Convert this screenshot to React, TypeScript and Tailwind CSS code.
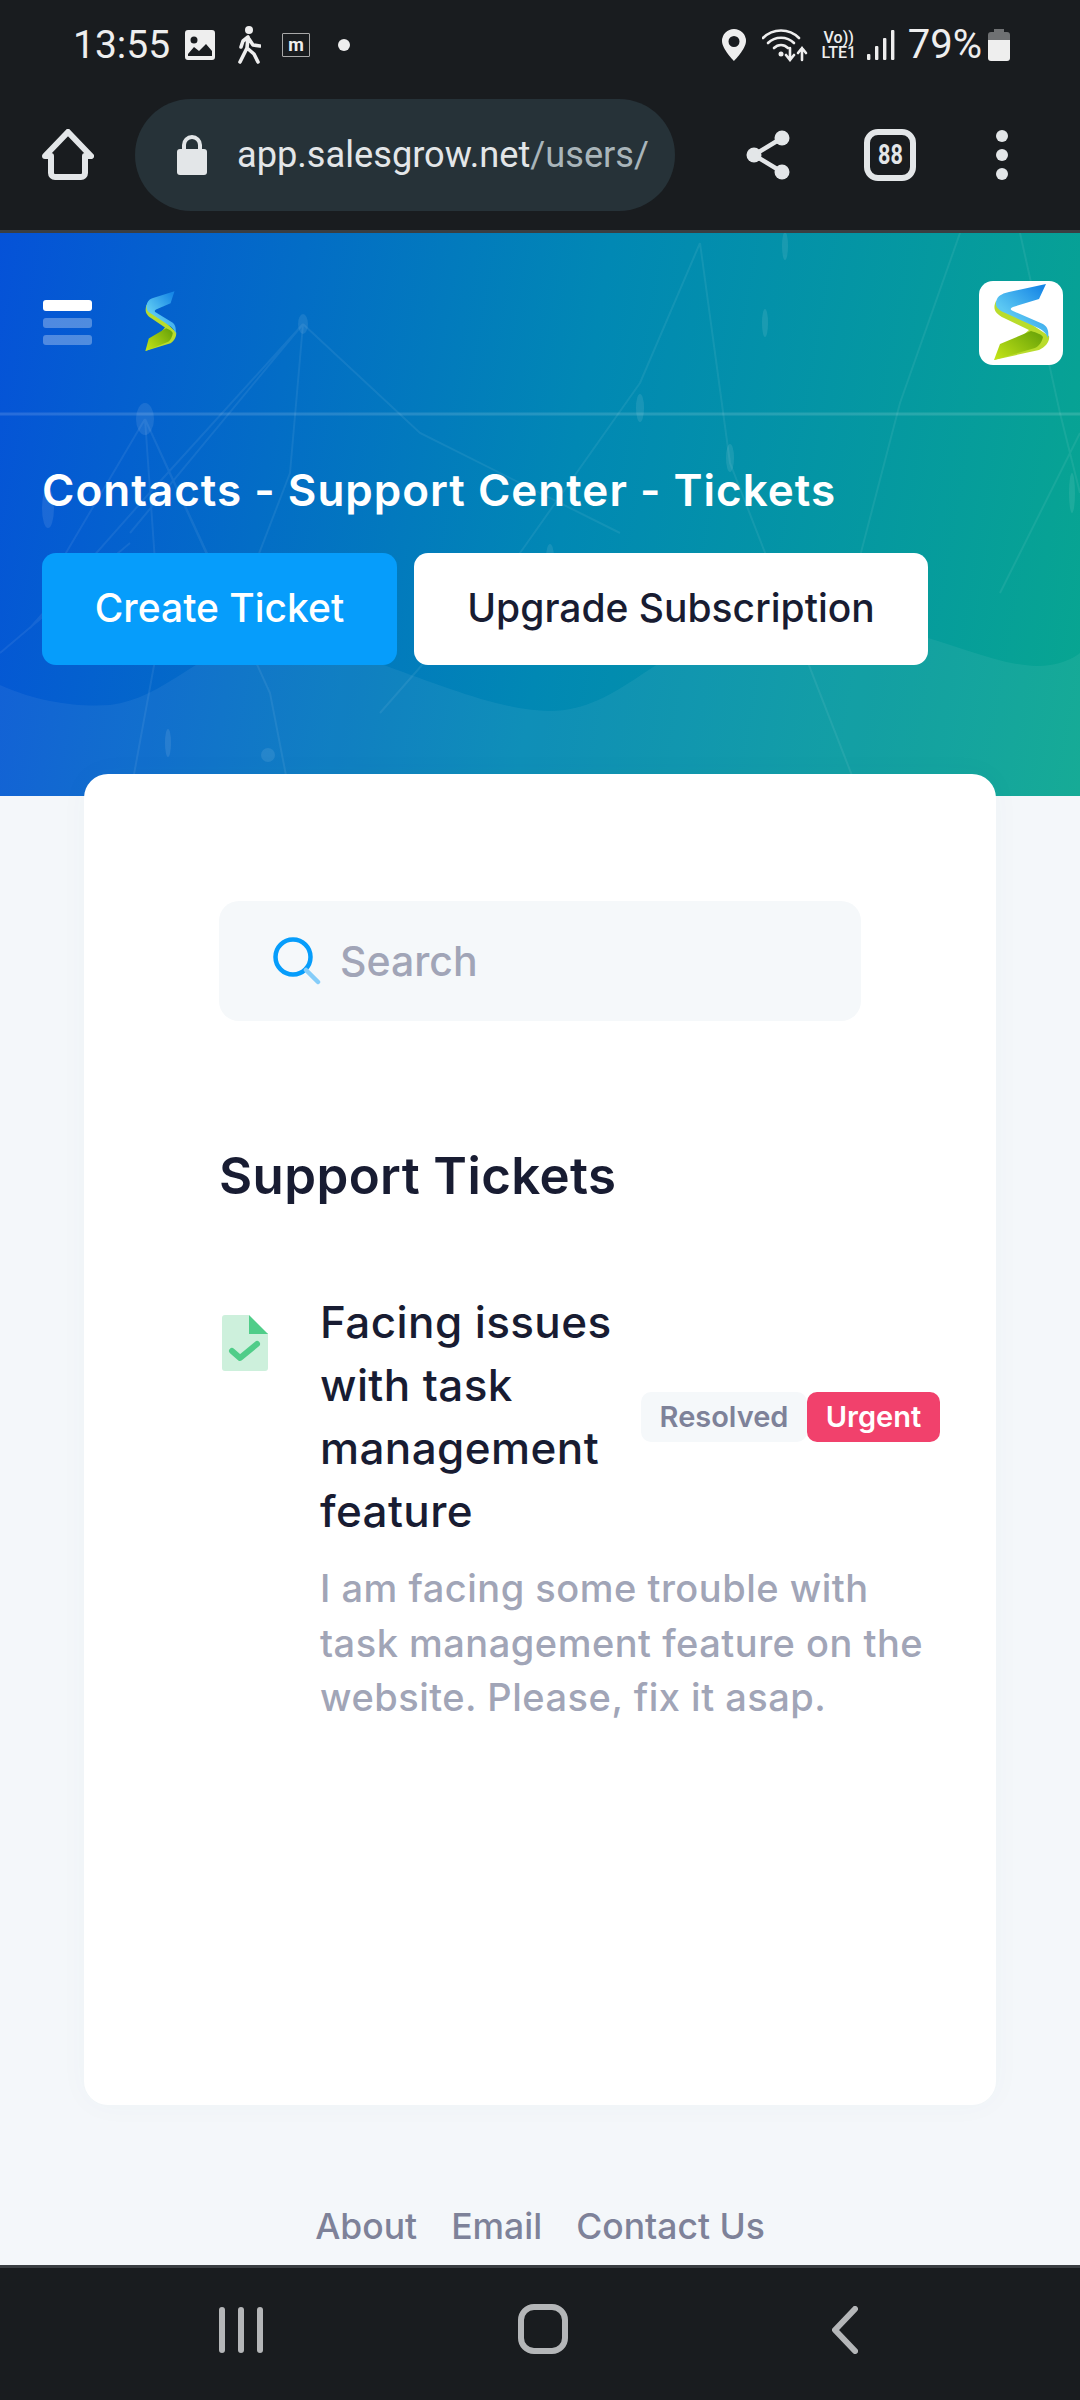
const Logo = ({ id, className }: { id: string; className: string }) => (
  <svg viewBox="0 0 84 84" preserveAspectRatio="none" className={className} aria-hidden="true">
    <defs>
      <linearGradient id={`${id}b`} x1="0.8" y1="0" x2="0.3" y2="0.6">
        <stop offset="0" stopColor="#1787e6" />
        <stop offset="1" stopColor="#5cc8f2" />
      </linearGradient>
      <linearGradient id={`${id}g`} x1="0" y1="1" x2="1" y2="0.3">
        <stop offset="0" stopColor="#c6e617" />
        <stop offset="1" stopColor="#6fa80a" />
      </linearGradient>
    </defs>
    <path d="M17 20C13 29 17 33 25 37L50 49L15 79L60 69C67 66 71 60 70 55L40 35Z" fill="#b9dc2c" />
    <path d="M67 3L60 18L34 26C31 27 31 29 34 30L64 43C69 46 70 51 69 57C67 51 62 48 57 46L24 31C18 28 15 24 18 18C20 14 25 12 30 11Z" fill={`url(#${id}b)`} />
    <path d="M52 50C58 52 62 53 64 56C63 61 60 65 56 67L15 79L21 63Z" fill={`url(#${id}g)`} />
  </svg>
);

const HeaderArt = () => (
  <svg viewBox="0 0 1080 563" className="absolute inset-0 h-full w-full" aria-hidden="true">
    <path d="M0 452C40 470 80 474 110 472C170 465 210 405 270 405C350 405 470 478 550 478C620 478 660 410 730 400C800 392 860 388 910 400C960 412 1010 438 1050 432C1062 430 1072 426 1080 420V563H0Z" fill="#ffffff" opacity="0.06" />
    <path d="M0 181H1080" stroke="#ffffff" strokeOpacity="0.14" strokeWidth="3" />
    <g stroke="#ffffff" strokeOpacity="0.07" strokeWidth="2" fill="none">
      <path d="M303 91L145 265L30 395M303 91L130 300M303 91L290 240L240 370M303 91L420 200L620 300M145 186L60 330M145 186L230 370M145 186L160 400L130 563M145 186L270 460L290 563M640 150L700 10M640 150L520 320L380 480M730 230L700 10M730 230L860 563M1020 0L1060 180L1080 260M960 0L900 170L840 400M1080 200L1000 360M0 420L130 310" />
    </g>
    <g fill="#ffffff" opacity="0.09">
      <ellipse cx="303" cy="91" rx="5" ry="10" />
      <ellipse cx="145" cy="186" rx="9" ry="16" />
      <circle cx="162" cy="365" r="6" />
      <circle cx="225" cy="365" r="6" />
      <circle cx="268" cy="522" r="7" />
      <ellipse cx="640" cy="175" rx="4" ry="14" />
      <ellipse cx="785" cy="13" rx="3" ry="14" />
      <ellipse cx="765" cy="90" rx="3" ry="14" />
      <ellipse cx="730" cy="225" rx="4" ry="14" />
      <ellipse cx="550" cy="325" rx="4" ry="14" />
      <ellipse cx="880" cy="380" rx="5" ry="20" />
      <ellipse cx="48" cy="275" rx="6" ry="20" />
      <ellipse cx="168" cy="510" rx="3" ry="14" />
      <ellipse cx="1072" cy="260" rx="3" ry="20" />
    </g>
  </svg>
);

export default function App() {
  return (
    <div className="flex h-[2400px] w-[1080px] flex-col overflow-hidden bg-[#f4f7fa] font-[Inter,sans-serif]">
      {/* Status bar + browser toolbar */}
      <div className="h-[233px] shrink-0 bg-[#191c1f] font-[Roboto,sans-serif]">
        <div className="flex h-[90px] items-center justify-between pl-[73px] pr-[70px] text-[#eeeeee]">
          <div className="flex items-center">
            <span className="text-[39px] leading-none">13:55</span>
            <svg viewBox="0 0 30 30" className="ml-[15px] h-[30px] w-[30px]" aria-hidden="true">
              <path fillRule="evenodd" d="M3 0H27A3 3 0 0 1 30 3V27A3 3 0 0 1 27 30H3A3 3 0 0 1 0 27V3A3 3 0 0 1 3 0ZM3 24V26H27V21L21 14L14 21L9 17ZM9 6.5A3.5 3.5 0 1 0 9 13.5A3.5 3.5 0 1 0 9 6.5Z" fill="#eeeeee" />
            </svg>
            <svg viewBox="0 0 26 38" className="ml-[20px] h-[38px] w-[26px]" aria-hidden="true">
              <circle cx="14" cy="4" r="4" fill="#eeeeee" />
              <path d="M13 11L8 15L6 21M13 11L12 22L5 36M12 22L19 28L23 36M14 13L18 19L25 20" stroke="#eeeeee" strokeWidth="3.6" fill="none" strokeLinecap="round" strokeLinejoin="round" />
            </svg>
            <div className="ml-[21px] flex h-[24px] w-[28px] items-center justify-center rounded-[1px] border border-[#a8a8a8] text-[18px] font-bold leading-none">m</div>
            <div className="ml-[28px] h-[12px] w-[12px] rounded-full bg-[#eeeeee]" />
          </div>
          <div className="flex items-center">
            <svg viewBox="0 0 24 32" className="h-[32px] w-[24px]" aria-hidden="true">
              <path fillRule="evenodd" d="M12 0A12 12 0 0 1 24 12C24 20 12 32 12 32C12 32 0 20 0 12A12 12 0 0 1 12 0ZM12 7A5.5 5.5 0 1 0 12 18A5.5 5.5 0 1 0 12 7Z" fill="#eeeeee" />
            </svg>
            <svg viewBox="0 0 46 34" className="ml-[16px] h-[34px] w-[46px]" aria-hidden="true">
              <g fill="none" stroke="#eeeeee" strokeWidth="2.6" strokeLinecap="round">
                <path d="M1 10C11 0 27 0 37 10" />
                <path d="M6 15C13 8 25 8 32 15" />
                <path d="M12 20C16 16 22 16 26 20" />
                <path d="M28 20V31M24 27L28 32L32 27" />
                <path d="M40 32V20M36 25L40 20L44 25" />
              </g>
              <circle cx="19" cy="26" r="2.5" fill="#eeeeee" />
            </svg>
            <div className="ml-[12px] flex w-[38px] flex-col items-center text-[16px] font-medium leading-[15px]">
              <span>Vo))</span>
              <span>LTE1</span>
            </div>
            <svg viewBox="0 0 28 32" className="ml-[9px] h-[32px] w-[28px]" aria-hidden="true">
              <g fill="#eeeeee">
                <rect x="0" y="25" width="3.4" height="6" rx="1" />
                <rect x="8" y="17" width="3.4" height="14" rx="1" />
                <rect x="16" y="9" width="3.4" height="22" rx="1" />
                <rect x="24" y="1" width="3.4" height="30" rx="1" />
              </g>
            </svg>
            <span className="ml-[13px] text-[40px] leading-none">79%</span>
            <svg viewBox="0 0 22 32" className="ml-[6px] h-[32px] w-[22px]" aria-hidden="true">
              <path d="M6 0H16V3H19A3 3 0 0 1 22 6V11H0V6A3 3 0 0 1 3 3H6Z" fill="#6f7173" />
              <path d="M0 11H22V29A3 3 0 0 1 19 32H3A3 3 0 0 1 0 29Z" fill="#eeeeee" />
            </svg>
          </div>
        </div>
        <div className="flex h-[140px] items-center pb-[10px]">
          <svg viewBox="0 0 52 52" className="ml-[42px] h-[52px] w-[52px]" aria-hidden="true">
            <path d="M26 3L49 27H43V44A4 4 0 0 1 39 48H13A4 4 0 0 1 9 44V27H3Z" fill="none" stroke="#e3e6e8" strokeWidth="6" strokeLinejoin="round" />
          </svg>
          <div className="ml-[41px] flex h-[112px] w-[540px] items-center rounded-full bg-[#263238] pl-[42px]">
            <svg viewBox="0 0 30 40" className="h-[40px] w-[30px]" aria-hidden="true">
              <path d="M7 16V10A8 8 0 0 1 23 10V16" fill="none" stroke="#e3e6e8" strokeWidth="4" />
              <rect x="0" y="14" width="30" height="26" rx="3" fill="#e3e6e8" />
            </svg>
            <span className="ml-[30px] whitespace-nowrap text-[36.2px] leading-none text-[#e3e6e8]">
              app.salesgrow.net<span className="text-[#a9b5ba]">/users/</span>
            </span>
          </div>
          <svg viewBox="0 0 44 50" className="ml-[71px] h-[50px] w-[44px]" aria-hidden="true">
            <g fill="#e3e6e8">
              <circle cx="36" cy="8" r="7.5" />
              <circle cx="8" cy="25" r="7.5" />
              <circle cx="36" cy="42" r="7.5" />
            </g>
            <path d="M36 8L8 25L36 42" fill="none" stroke="#e3e6e8" strokeWidth="4.5" />
          </svg>
          <div className="ml-[74px] flex h-[52px] w-[52px] items-center justify-center rounded-[14px] border-[6px] border-[#e3e6e8] text-[#e3e6e8]">
            <span className="scale-x-[0.8] text-[27px] font-bold leading-none">88</span>
          </div>
          <div className="ml-[80px] flex h-[50px] w-[12px] flex-col justify-between">
            <div className="h-[12px] w-[12px] rounded-full bg-[#e3e6e8]" />
            <div className="h-[12px] w-[12px] rounded-full bg-[#e3e6e8]" />
            <div className="h-[12px] w-[12px] rounded-full bg-[#e3e6e8]" />
          </div>
        </div>
        <div className="h-[3px] bg-[#3a3e42]" />
      </div>

      {/* Hero */}
      <div className="relative h-[563px] shrink-0 bg-[linear-gradient(100deg,#0552d8_0%,#0188b4_52%,#08a690_100%)]">
        <HeaderArt />
        <div className="relative flex h-[181px] justify-between pl-[43px] pr-[17px] pt-[48px]">
          <div className="flex items-start">
            <div className="flex w-[49px] flex-col gap-[7px] pt-[19px]">
              <div className="h-[11px] rounded-[3px] bg-white" />
              <div className="h-[10px] rounded-[3px] bg-white/30" />
              <div className="h-[10px] rounded-[3px] bg-white/30" />
            </div>
            <Logo id="s" className="ml-[45px] mt-[8px] h-[66px] w-[47px]" />
          </div>
          <div className="h-[84px] w-[84px] rounded-[14px] bg-white">
            <Logo id="l" className="h-[84px] w-[84px]" />
          </div>
        </div>
        <div className="relative px-[42px]">
          <h1 className="mt-[50px] text-[44px] font-semibold leading-[52px] tracking-[1px] text-white">Contacts - Support Center - Tickets</h1>
          <div className="mt-[37px] flex gap-[17px]">
            <div className="flex h-[112px] w-[355px] items-center justify-center rounded-[14px] bg-[#069dfb] pb-[2px] text-[39px] font-medium text-white">Create Ticket</div>
            <div className="flex h-[112px] w-[514px] items-center justify-center rounded-[14px] bg-white pb-[2px] text-[39px] font-medium text-[#181c32]">Upgrade Subscription</div>
          </div>
        </div>
      </div>

      {/* Card */}
      <div className="relative mx-[84px] -mt-[22px] h-[1331px] shrink-0 rounded-[24px] bg-white px-[135px] pt-[127px] shadow-[0_0_30px_rgba(76,87,125,0.03)]">
        <div className="flex h-[120px] w-[642px] items-center rounded-[20px] bg-[#f5f8fa] pl-[54px]">
          <svg viewBox="0 0 48 48" className="h-[48px] w-[48px]" aria-hidden="true">
            <circle cx="20" cy="20" r="17.5" fill="none" stroke="#069dfb" strokeWidth="4.5" />
            <path d="M33 33L45 45" stroke="#85cdf9" strokeWidth="4.5" strokeLinecap="round" />
          </svg>
          <span className="ml-[19px] text-[41px] font-medium leading-none text-[#a1a5b7]">Search</span>
        </div>
        <h2 className="mt-[123px] text-[51px] font-semibold leading-[64px] tracking-[0.4px] text-[#181c32]">Support Tickets</h2>
        <div className="mt-[83px] flex w-[720px]">
          <svg viewBox="0 0 46 56" className="ml-[3px] mt-[24px] h-[56px] w-[46px] shrink-0" aria-hidden="true">
            <path d="M3 0H27V18H46V53A3 3 0 0 1 43 56H3A3 3 0 0 1 0 53V3A3 3 0 0 1 3 0Z" fill="#cdf0dc" />
            <path d="M27 0L46 19H27Z" fill="#50cd89" />
            <path d="M10 36L18 43L35 29" fill="none" stroke="#50cd89" strokeWidth="6" strokeLinecap="round" strokeLinejoin="round" />
          </svg>
          <div className="ml-[52px] flex-1">
            <div className="flex items-center">
              <div className="w-[321px] text-[44px] font-medium leading-[63px] tracking-[0.4px] text-[#181c32]">
                Facing issues with task management feature
              </div>
              <div className="flex">
                <span className="flex h-[50px] w-[166px] items-center justify-center rounded-[10px] bg-[#f5f8fa] text-[29px] font-semibold text-[#7e8299]">Resolved</span>
                <span className="flex h-[50px] w-[133px] items-center justify-center rounded-[10px] bg-[#f1416c] text-[29px] font-semibold text-white">Urgent</span>
              </div>
            </div>
            <p className="mt-[18px] w-[620px] text-[38px] font-medium leading-[54.5px] tracking-[0.5px] text-[#a1a5b7]">
              I am facing some trouble with task management feature on the website. Please, fix it asap.
            </p>
          </div>
        </div>
      </div>

      {/* Footer */}
      <div className="flex flex-1 items-start justify-center gap-[34px] pt-[100px] text-[35.5px] font-medium leading-[44px] text-[#7e8299]">
        <span>About</span>
        <span>Email</span>
        <span>Contact Us</span>
      </div>

      {/* Android nav */}
      <div className="h-[135px] shrink-0 bg-[#191c1f]">
        <div className="h-[3px] bg-[#3a3e42]" />
        <div className="relative flex h-[132px] items-start pt-[36px]">
          <div className="ml-[219px] flex h-[48px] w-[44px] justify-between pt-[3px]">
            <div className="h-[46px] w-[6px] rounded-full bg-[#b4b6b8]" />
            <div className="h-[46px] w-[6px] rounded-full bg-[#b4b6b8]" />
            <div className="h-[46px] w-[6px] rounded-full bg-[#b4b6b8]" />
          </div>
          <div className="ml-[255px] h-[50px] w-[50px] rounded-[16px] border-[6px] border-[#b4b6b8]" />
          <svg viewBox="0 0 26 48" className="ml-[264px] mt-[2px] h-[48px] w-[26px]" aria-hidden="true">
            <path d="M23 3L3 24L23 45" fill="none" stroke="#b4b6b8" strokeWidth="6" strokeLinecap="round" strokeLinejoin="round" />
          </svg>
        </div>
      </div>
    </div>
  );
}
